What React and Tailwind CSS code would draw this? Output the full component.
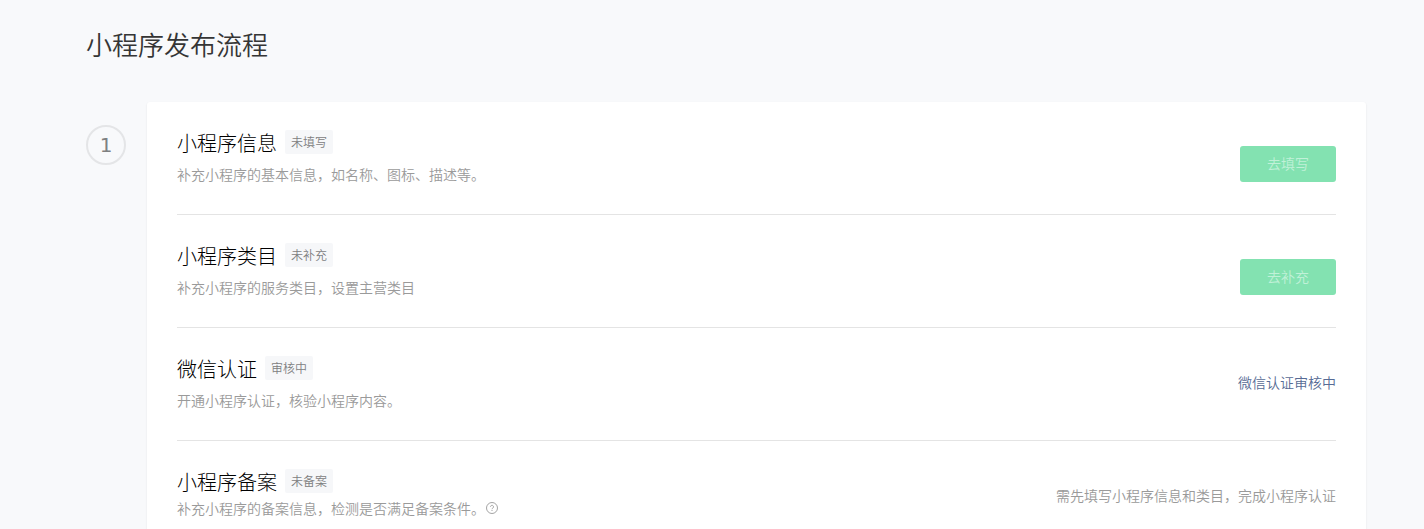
const steps = [
  {
    title: '小程序信息',
    status: '未填写',
    desc: '补充小程序的基本信息，如名称、图标、描述等。',
    button: '去填写',
  },
  {
    title: '小程序类目',
    status: '未补充',
    desc: '补充小程序的服务类目，设置主营类目',
    button: '去补充',
  },
  {
    title: '微信认证',
    status: '审核中',
    desc: '开通小程序认证，核验小程序内容。',
    link: '微信认证审核中',
  },
  {
    title: '小程序备案',
    status: '未备案',
    desc: '补充小程序的备案信息，检测是否满足备案条件。',
    help: true,
    note: '需先填写小程序信息和类目，完成小程序认证',
  },
]

function HelpIcon() {
  return (
    <svg className="h-3 w-3" viewBox="0 0 12 12" fill="none" stroke="currentColor" strokeWidth="0.9">
      <circle cx="6" cy="6" r="5.5" />
      <path d="M4.5 4.8a1.5 1.5 0 1 1 2.4 1.2c-.6.4-.9.6-.9 1.2" />
      <path d="M6 8v1" />
    </svg>
  )
}

function StepRow({ step }) {
  return (
    <li className="flex min-h-28 items-center justify-between gap-6 border-b border-[#e4e4e4] box-content last:border-b-0">
      <div className="self-start pt-7">
        <div className="flex items-start gap-2">
          <h2 className="text-xl leading-[25px] font-light text-black">{step.title}</h2>
          <span className="rounded-xs bg-[#f6f7f9] px-1.5 text-xs leading-6 text-[#7e8081]">{step.status}</span>
        </div>
        <div className={`flex items-center gap-px text-sm leading-[22px] text-[#9a9a9a] ${step.help ? 'mt-[3px]' : 'mt-2'}`}>
          <p>{step.desc}</p>
          {step.help && (
            <button type="button" aria-label="备案条件说明">
              <HelpIcon />
            </button>
          )}
        </div>
      </div>

      {step.button && (
        <button
          type="button"
          disabled
          className="mt-3 h-9 w-24 shrink-0 rounded-[3px] bg-[#83e2b1] pb-0.5 text-sm text-[#c0f1d8]"
        >
          {step.button}
        </button>
      )}
      {step.link && (
        <a href="#" className="shrink-0 pb-1 text-sm text-[#576b95]">{step.link}</a>
      )}
      {step.note && <p className="pb-1 text-sm text-[#9a9a9a]">{step.note}</p>}
    </li>
  )
}

export default function App() {
  return (
    <div className="min-h-screen bg-[#f8f9fb] pt-6 pr-[58px] pl-[86px] font-['Noto_Sans_CJK_SC',sans-serif] font-[350]">
      <h1 className="text-[26px] leading-10 text-[#353535]">小程序发布流程</h1>

      <div className="mt-[38px] flex items-start gap-[21px]">
        {/* Step number */}
        <div className="mt-[23px] flex h-10 w-10 shrink-0 items-center justify-center rounded-full border-2 border-[#e4e5e7] font-['DejaVu_Sans',sans-serif] text-xl font-normal text-[#7e8081]">
          1
        </div>

        <ul className="flex-1 rounded-[3px] bg-white px-[30px] shadow-[0_1px_2px_rgba(0,0,0,0.1)]">
          {steps.map((step) => (
            <StepRow key={step.title} step={step} />
          ))}
        </ul>
      </div>
    </div>
  )
}
